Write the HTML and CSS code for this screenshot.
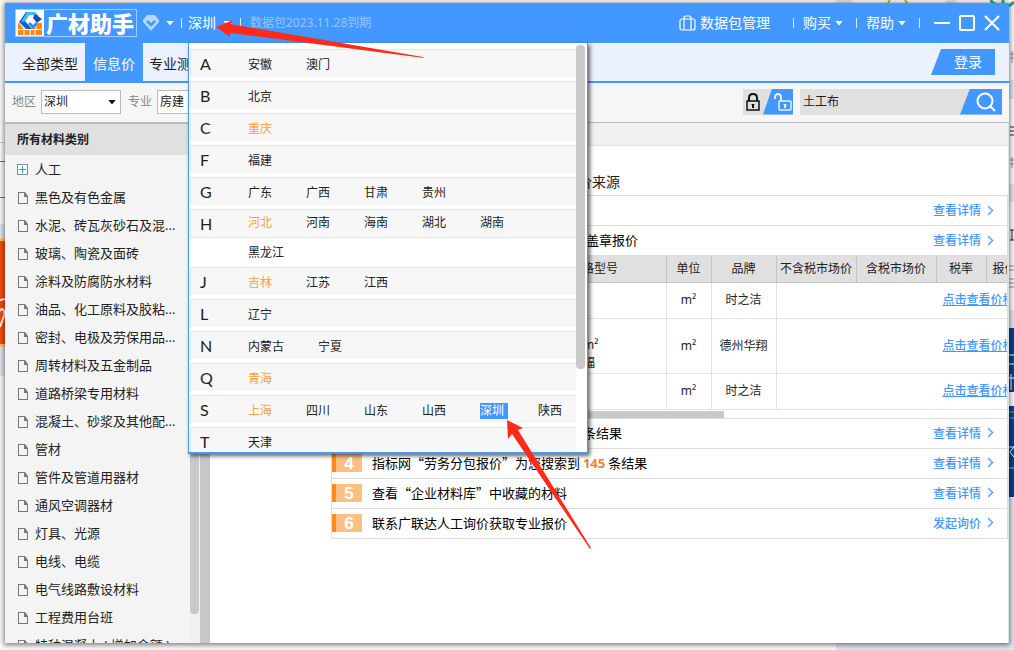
FILE: index.html
```html
<!DOCTYPE html>
<html lang="zh-CN">
<head>
<meta charset="utf-8">
<title>广材助手</title>
<link rel="stylesheet" href="styles.css">
</head>
<body>
<svg class="backdrop backdrop-left" width="5" height="650" aria-hidden="true">
  <path d="M0 142.500H5" stroke="#c9c9c9"/>
  <path d="M0 161.500H5M0 197.500H5" stroke="#2a86dc"/>
  <rect y="224" width="5" height="152" fill="#dfe5ec"/>
  <rect y="238" width="5" height="109" fill="#f3c982"/>
  <rect y="241" width="5" height="103" fill="#f84a0c"/>
  <path d="M0 300L5 299M0 311C3 306 5 311 4 316L0 327" stroke="#fff" stroke-width="2" fill="none"/>
</svg>
<svg class="backdrop backdrop-right" width="200" height="650" aria-hidden="true">
  <path d="M22 0h16v3h-16zM132 0h10v3h-10z" fill="#dfe5ec"/>
  <path d="M74 3l2-3M93 3l-2-3" stroke="#91c81e" stroke-width="2"/>
  <path d="M177 0q1 4 5 4M189 0v4M200 2l-5 4" stroke="#27ae79" stroke-width="3" fill="none"/>
  <path d="M195 80h5v19h-5zM195 184h5v18h-5zM195 310h5v18h-5zM22 643h178v7H22zM195 497h5v153h-5z" fill="#dfe5ee"/>
  <path d="M195 328h5v64h-5zM195 406h5v24h-5zM195 430h5v67h-5z" fill="#07408b"/>
  <path d="M195 468h5" stroke="#c3bd87"/>
  <path d="M196 54h4M198 51v12M196 58h4M196 160h4M198 157v11M196 164h4M195 266h5M195 270h5M195 279h5M195 283h5M195 287h5M195 412h5M195 418h5" stroke="#8b8f94"/>
  <path d="M196 127h4M196 131h4M196 135h4M196 230h4M196 240h4M198 230v10" stroke="#222"/>
  <path d="M195 355h5M195 364h5M195 378h5M197 374v16M195 447l5 0-4 5 4 5" stroke="#fff" fill="none"/>
</svg>

<div class="app">
  <header class="titlebar">
    <h1 class="logo">
      <svg class="logo-mark" width="28" height="26" viewBox="0 0 28 26" aria-hidden="true">
        <path d="M2 13h24v12H2z" fill="#ff8717"/>
        <path d="M2 19.500h24M8 13v6M20 13v6M8 20v5M19 20v5M14 20v5" stroke="#fff"/>
        <path d="M11 1h9l7 8-7 6-6 5H9L2 12z" fill="#fff"/>
        <path d="M10 2h5l-6 9 7 8h-6L3 12z" fill="#1262ce"/>
        <path d="M11 2h8l4 4-3 1-3-2h-4l-4 6-4 1z" fill="#41bdf5"/>
        <path d="M19 4l7 5-5 4-4-5z" fill="#184fb3"/>
        <path d="M12 14l5 5 5-5-2-2-3 3-3-3z" fill="#2a8be8"/>
      </svg>
      <span class="logo-text">广材助手</span>
    </h1>
    <button class="bar-button level" type="button" aria-label="会员">
      <svg width="16" height="16" viewBox="0 0 16 16"><path d="M4 0h8l4 5v2l-8 9-8-9V5z" fill="#b4d6ff"/><path d="M4 6l4 4 4-4" fill="none" stroke="#4398ff" stroke-width="2.500"/></svg>
      <span class="caret"></span>
    </button>
    <span class="rule"></span>
    <div class="city-picker">
      <button class="bar-button city-button" type="button">深圳<span class="caret"></span></button>
      <div class="city-menu">
        <div class="city-groups">
          <div class="group"><b class="letter">A</b><div class="cities"><a href="#">安徽</a><a href="#">澳门</a></div></div>
          <div class="group"><b class="letter">B</b><div class="cities"><a href="#">北京</a></div></div>
          <div class="group"><b class="letter">C</b><div class="cities"><a class="hot" href="#">重庆</a></div></div>
          <div class="group"><b class="letter">F</b><div class="cities"><a href="#">福建</a></div></div>
          <div class="group"><b class="letter">G</b><div class="cities"><a href="#">广东</a><a href="#">广西</a><a href="#">甘肃</a><a href="#">贵州</a></div></div>
          <div class="group group-multi"><b class="letter">H</b><div class="cities"><a class="hot" href="#">河北</a><a href="#">河南</a><a href="#">海南</a><a href="#">湖北</a><a href="#">湖南</a></div></div>
          <div class="group-more"><div class="cities"><a href="#">黑龙江</a></div></div>
          <div class="group"><b class="letter">J</b><div class="cities"><a class="hot" href="#">吉林</a><a href="#">江苏</a><a href="#">江西</a></div></div>
          <div class="group"><b class="letter">L</b><div class="cities"><a href="#">辽宁</a></div></div>
          <div class="group"><b class="letter">N</b><div class="cities"><a href="#">内蒙古</a><a href="#">宁夏</a></div></div>
          <div class="group"><b class="letter">Q</b><div class="cities"><a class="hot" href="#">青海</a></div></div>
          <div class="group"><b class="letter">S</b><div class="cities"><a class="hot" href="#">上海</a><a href="#">四川</a><a href="#">山东</a><a href="#">山西</a><a class="selected" href="#">深圳</a><a href="#">陕西</a></div></div>
          <div class="group"><b class="letter">T</b><div class="cities"><a href="#">天津</a></div></div>
        </div>
        <div class="menu-track"><div class="menu-thumb"></div></div>
      </div>
    </div>
    <span class="rule"></span>
    <span class="expiry">数据包2023.11.28到期</span>
    <button class="bar-button packages" type="button">
      <svg width="17" height="16" viewBox="0 0 17 16" fill="none" stroke="#fff" stroke-width="1.200"><rect x="1" y="4" width="15" height="11" rx="2"/><path d="M5 15V3q0-2 2-2h3q2 0 2 2v12"/></svg>
      数据包管理
    </button>
    <span class="rule"></span>
    <button class="bar-button bar-menu" type="button">购买<span class="caret"></span></button>
    <span class="rule"></span>
    <button class="bar-button bar-menu" type="button">帮助<span class="caret"></span></button>
    <span class="rule"></span>
    <div class="window-buttons">
      <button class="bar-button" type="button" aria-label="最小化"><svg width="16" height="16"><path d="M0 8h16" stroke="#fff" stroke-width="2"/></svg></button>
      <button class="bar-button" type="button" aria-label="最大化"><svg width="16" height="16"><rect x="1" y="1" width="14" height="14" rx="1" fill="none" stroke="#fff" stroke-width="2"/></svg></button>
      <button class="bar-button" type="button" aria-label="关闭"><svg width="16" height="16"><path d="M1 1l14 14M15 1L1 15" stroke="#fff" stroke-width="2"/></svg></button>
    </div>
  </header>

  <nav class="tabs">
    <a class="tab tab-first" href="#">全部类型</a>
    <a class="tab tab-active" href="#">信息价</a>
    <a class="tab" href="#">专业测</a>
    <button class="login" type="button">登录</button>
  </nav>

  <div class="filters">
    <label for="area">地区</label>
    <span class="select-box"><select id="area"><option>深圳</option></select></span>
    <label for="major">专业</label>
    <span class="select-box"><select id="major"><option>房建</option></select></span>
    <div class="locks">
      <button class="lock" type="button" aria-label="锁定"><svg width="14" height="18" viewBox="0 0 14 18"><path d="M3 8V5q0-4 4-4t4 4v3" fill="none" stroke="#111" stroke-width="2"/><rect x="1" y="8" width="12" height="9" fill="none" stroke="#111" stroke-width="1.500"/><path d="M5 11h4l-1 1v3H6v-3z" fill="#111"/></svg></button>
      <button class="unlock" type="button" aria-label="解锁"><svg width="18" height="18" viewBox="0 0 18 18"><path d="M1 6V5q0-4 3-4t3 4v3" fill="none" stroke="#e8f1ff" stroke-width="2"/><rect x="5" y="8" width="12" height="9" rx="1" fill="none" stroke="#e8f1ff" stroke-width="1.500"/><path d="M9 11h4l-1 1v3h-2v-3z" fill="#e8f1ff"/></svg></button>
    </div>
    <form class="search">
      <input type="text" value="土工布" aria-label="搜索">
      <button type="button" aria-label="搜索"><svg width="20" height="20" viewBox="0 0 20 20"><circle cx="9" cy="9" r="7.500" fill="none" stroke="#fff" stroke-width="2"/><path d="M14 14l5 5" stroke="#fff" stroke-width="2"/></svg></button>
    </form>
  </div>

  <div class="workspace">
    <aside class="sidebar">
      <h2 class="sidebar-title">所有材料类别</h2>
      <div class="tree-area">
        <ul class="tree">
          <li><svg width="11" height="11"><rect x=".5" y=".5" width="10" height="10" fill="#fff" stroke="#8a8a8a"/><path d="M2 5.500h7M5.500 2v7" stroke="#27a9df"/></svg>人工</li>
          <li class="doc">黑色及有色金属</li>
          <li class="doc">水泥、砖瓦灰砂石及混...</li>
          <li class="doc">玻璃、陶瓷及面砖</li>
          <li class="doc">涂料及防腐防水材料</li>
          <li class="doc">油品、化工原料及胶粘...</li>
          <li class="doc">密封、电极及劳保用品...</li>
          <li class="doc">周转材料及五金制品</li>
          <li class="doc">道路桥梁专用材料</li>
          <li class="doc">混凝土、砂浆及其他配...</li>
          <li class="doc">管材</li>
          <li class="doc">管件及管道用器材</li>
          <li class="doc">通风空调器材</li>
          <li class="doc">灯具、光源</li>
          <li class="doc">电线、电缆</li>
          <li class="doc">电气线路敷设材料</li>
          <li class="doc">工程费用台班</li>
          <li class="doc">特种混凝土 ( 增加金额 )</li>
        </ul>
        <div class="tree-track"><div class="tree-thumb"></div></div>
      </div>
    </aside>
    <div class="splitter"></div>
    <main class="content">
      <div class="content-strip"></div>
      <h2 class="source-title">价来源</h2>
      <section class="results">
        <div class="result"><a class="detail" href="#">查看详情</a></div>
        <div class="result"><span class="result-tail">盖章报价</span><a class="detail" href="#">查看详情</a></div>
        <div class="quote-scroll">
          <table class="quotes">
            <colgroup><col class="col-spec"><col class="col-unit"><col class="col-brand"><col class="col-price"><col class="col-price"><col class="col-rate"><col class="col-quote"></colgroup>
            <thead>
              <tr><th class="spec">规格型号</th><th>单位</th><th>品牌</th><th>不含税市场价</th><th>含税市场价</th><th>税率</th><th class="quote-head">报价</th></tr>
            </thead>
            <tbody>
              <tr><td></td><td>m²</td><td>时之洁</td><td class="price-cell" colspan="4"><a href="#">点击查看价格</a></td></tr>
              <tr class="tall"><td class="spec-cell">m²<br>幅</td><td>m²</td><td>德州华翔</td><td class="price-cell" colspan="4"><a href="#">点击查看价格</a></td></tr>
              <tr><td></td><td>m²</td><td>时之洁</td><td class="price-cell" colspan="4"><a href="#">点击查看价格</a></td></tr>
            </tbody>
          </table>
          <div class="quote-track"><div class="quote-thumb"></div></div>
        </div>
        <div class="result"><span class="result-tail results-count">条结果</span><a class="detail" href="#">查看详情</a></div>
        <div class="result"><b class="badge">4</b><span>指标网“劳务分包报价”为您搜索到 <strong>145</strong> 条结果</span><a class="detail" href="#">查看详情</a></div>
        <div class="result"><b class="badge">5</b><span>查看“企业材料库”中收藏的材料</span><a class="detail" href="#">查看详情</a></div>
        <div class="result"><b class="badge">6</b><span>联系广联达人工询价获取专业报价</span><a class="detail" href="#">发起询价</a></div>
      </section>
    </main>
  </div>
</div>

<svg class="arrows" width="600" height="560" aria-hidden="true">
  <path d="M216 27L233 20L230 24L423 57L424 58L230 33L230 37z" fill="#ff2a1a"/>
  <path d="M507 420L523 428L518 430L591 548L590 549L512 434L508 439z" fill="#ff2a1a"/>
</svg>
</body>
</html>
```
FILE: styles.css
```css
* { box-sizing: border-box; }

body {
  margin: 0;
  height: 100vh;
  padding: 3px 5px 7px;
  overflow: hidden;
  background: #fafafa;
  color: #222;
  font: 13px/20px "Noto Sans", "Noto Sans CJK SC", sans-serif;
}

button, input, select { font: inherit; color: inherit; border: 0; padding: 0; margin: 0; }
button { background: none; cursor: pointer; }
a { color: inherit; text-decoration: none; }
h1, h2, ul { margin: 0; padding: 0; list-style: none; }
svg { display: block; flex: none; }

.backdrop { position: absolute; top: 0; z-index: -1; }
.backdrop-left { left: 0; }
.backdrop-right { right: 0; }
.arrows { position: absolute; left: 0; top: 0; z-index: 20; pointer-events: none; }

.app {
  height: 100%;
  display: flex;
  flex-direction: column;
  background: #fff;
  box-shadow: 0 1px 5px 1px rgba(0, 0, 0, .5);
}

/* Title bar */
.titlebar {
  flex: none;
  height: 40px;
  display: flex;
  align-items: center;
  gap: 9px;
  padding: 0 9px 0 10px;
  background: #4398ff;
  color: #fff;
  font-size: 14px;
}
.logo { display: flex; align-items: center; width: 122px; height: 28px; border: 1px solid #9fcbff; margin-right: -3px; }
.logo-mark { background: #fff; }
.logo-text { flex: 1; text-align: center; font: 900 22px/22px "Noto Sans CJK SC", sans-serif; padding-bottom: 3px; white-space: nowrap; }
.bar-button { display: flex; align-items: center; gap: 4px; white-space: nowrap; }
.bar-menu { margin-right: 4px; }
.level { gap: 7px; margin-right: -2px; }
.caret { width: 8px; height: 5px; background: #fff; clip-path: polygon(0 0, 100% 0, 50% 100%); }
.rule { width: 1px; height: 10px; background: #d9eaff; }
.city-picker { position: relative; align-self: stretch; display: flex; margin-left: -3px; }
.city-button { gap: 7px; }
.expiry { flex: 1; font-size: 12px; color: #93c4ff; white-space: nowrap; }
.packages { margin-right: 14px; }
.window-buttons { display: flex; gap: 9px; margin-left: 5px; }

/* City menu */
.city-menu {
  position: absolute;
  top: 100%;
  left: 0;
  z-index: 10;
  width: 400px;
  height: 411px;
  display: flex;
  padding: 0 2px 0 1px;
  background: #fff;
  border: solid #4398ff;
  border-width: 0 1px 2px;
  box-shadow: 2px 2px 4px rgba(0, 0, 0, .6);
  color: #222;
}
.city-groups { flex: 1; overflow: hidden; padding-top: 6px; }
.group { display: flex; align-items: center; height: 28px; margin-bottom: 4px; padding-left: 9px; background: #f7f7f7; border: solid #e5e5e5; border-width: 1px 0 0 1px; }
.group-multi { height: 28px; margin-bottom: 0; align-items: flex-start; }
.group-more { height: 30px; padding-left: 58px; border-top: 1px solid #e5e5e5; }
.letter { width: 48px; font: 400 16px/28px Lato, "Noto Sans", sans-serif; }
.cities { display: flex; gap: 30px; font-size: 12px; line-height: 16px; padding-top: 2px; }
.group-multi .cities { padding-top: 5px; }
.group-more .cities { padding-top: 7px; }
.cities a { padding-right: 4px; }
.cities .hot { color: #ff9f3e; }
.cities .selected { background: #4398ff; color: #fff; }
.menu-track { width: 9px; padding-top: 2px; }
.menu-thumb { height: 324px; border-radius: 4px; background: #c9c9c9; }

/* Tabs */
.tabs { flex: none; height: 40px; display: flex; background: #ebf1ff; border-bottom: 2px solid #4398ff; padding-right: 14px; font-size: 14px; }
.tab { padding: 0 8px 0 6px; line-height: 42px; white-space: nowrap; }
.tab-first { padding: 0 7px 0 17px; }
.tab-active { padding: 0 8px; background: #4398ff; color: #fff; }
.login { margin: 6px 0 0 auto; width: 64px; height: 26px; padding-left: 10px; background: #4398ff; color: #fff; clip-path: polygon(10px 0, 100% 0, 100% 100%, 0 100%); }

/* Filters */
.filters { flex: none; height: 40px; display: flex; align-items: center; gap: 5px; padding: 0 7px 2px; background: #f6f6f6; border-bottom: 1px solid #bbb; font-size: 12px; }
.filters label { color: #888; }
.select-box { position: relative; width: 80px; height: 24px; margin-right: 2px; display: flex; background: #fff; border: 1px solid #bbb; }
.select-box::after { content: ""; position: absolute; right: 4px; top: 9px; width: 8px; height: 5px; background: #111; clip-path: polygon(0 0, 100% 0, 50% 100%); pointer-events: none; }
.select-box select { appearance: none; width: 100%; padding-left: 2px; background: transparent; }
.locks { margin: 0 2px 0 auto; display: flex; height: 26px; background: #e0e0e0; }
.lock { width: 20px; display: grid; place-items: center; }
.unlock { width: 30px; display: flex; align-items: center; justify-content: flex-end; padding-right: 1px; background: #4398ff; clip-path: polygon(9px 0, 100% 0, 100% 100%, 0 100%); }
.search { display: flex; width: 202px; height: 26px; background: #e0e0e0; }
.search input { flex: 1; min-width: 0; padding-left: 3px; background: transparent; }
.search button { width: 42px; display: grid; place-items: center; padding-left: 10px; background: #4398ff; clip-path: polygon(10px 0, 100% 0, 100% 100%, 0 100%); }

/* Workspace */
.workspace { flex: 1; min-height: 0; display: flex; }
.sidebar { flex: none; width: 195px; display: flex; flex-direction: column; background: #f4f4f4; border-top: 1px solid #bbb; }
.sidebar-title { flex: none; height: 31px; padding-left: 12px; background: #e0e0e0; font-size: 12px; line-height: 31px; }
.tree-area { flex: 1; min-height: 0; display: flex; }
.tree { flex: 1; overflow: hidden; }
.tree li { display: flex; align-items: center; gap: 7px; height: 28px; padding-left: 12px; white-space: nowrap; }
.doc::before {
  content: "";
  flex: none;
  width: 10px;
  height: 12px;
  margin: 2px 0 0 1px;
  background:
    linear-gradient(#f4f4f4, #f4f4f4) 1px 1px / 5px 10px no-repeat,
    linear-gradient(#f4f4f4, #f4f4f4) 1px 5px / 8px 6px no-repeat,
    #777;
  clip-path: polygon(0 0, 7px 0, 100% 4px, 100% 100%, 0 100%);
}
.tree-track { width: 10px; padding-right: 1px; background: #f0f0f0; }
.tree-thumb { height: 94%; border-radius: 4px; background: #c9c9c9; }
.splitter { flex: none; width: 10px; background: #c7c7c7; }
.content { flex: 1; min-width: 0; border-right: 1px solid #e0e0e0; }
.content-strip { height: 23px; background: #f1f1f1; border-bottom: 1px solid #e2e2e2; }
.source-title { padding: 26px 0 3px 368px; font-size: 14px; font-weight: 400; line-height: 20px; }

.results { margin-left: 121px; border: solid #ddd; border-width: 1px 1px 0; }
.result { display: flex; align-items: center; height: 30px; padding-bottom: 1px; border-bottom: 1px solid #ddd; color: #000; font-family: "Noto Sans CJK SC", sans-serif; white-space: nowrap; }
.result-tail { padding-left: 254px; }
.results-count { padding-left: 251px; }
.badge { width: 30px; height: 18px; margin-right: 10px; background: #fdbf82; border-left: 4px solid #ff8a1c; color: #fff; font: 700 17px/19px "Liberation Sans", sans-serif; text-align: center; }
.result strong { color: #f08030; font: 700 13px/20px "Noto Sans", sans-serif; }
.detail { display: flex; align-items: center; gap: 4px; margin-left: auto; padding-right: 15px; color: #4398ff; font-size: 12px; font-weight: 500; }
.detail::after { content: ""; width: 6px; height: 6px; border: solid #4398ff; border-width: 1px 1px 0 0; box-shadow: inset -1px 1px 0 -0px rgba(67, 152, 255, .4); transform: rotate(45deg); }

/* Quotes */
.quote-scroll { overflow: hidden; border-bottom: 1px solid #ddd; }
.quotes { width: 848px; table-layout: fixed; border-collapse: collapse; font-size: 12px; line-height: 18px; text-align: center; }
.col-spec { width: 334px; }
.col-unit { width: 45px; }
.col-brand { width: 65px; }
.col-price { width: 80px; }
.col-rate { width: 50px; }
.col-quote { width: 194px; }
.quotes th { height: 26px; padding: 0; background: #e0e0e0; border-right: 1px solid #c4c4c4; border-bottom: 1px solid #c4c4c4; font-weight: 400; white-space: nowrap; }
.quotes td { height: 36px; padding: 0; border-right: 1px solid #e2e2e2; border-bottom: 1px solid #e2e2e2; }
.quotes .tall td { height: 55px; }
.quotes .spec { text-align: left; padding-left: 238px; }
.quotes .spec-cell { text-align: left; padding: 16px 0 0 251px; }
.quotes .quote-head { text-align: left; padding-left: 6px; }
.quotes .price-cell { text-align: left; padding-left: 166px; color: #4398ff; font-weight: 500; }
.price-cell a { text-decoration: underline; }
.quote-track { height: 8px; padding-top: 1px; }
.quote-thumb { width: 58%; height: 7px; background: #c9c9c9; }
```
